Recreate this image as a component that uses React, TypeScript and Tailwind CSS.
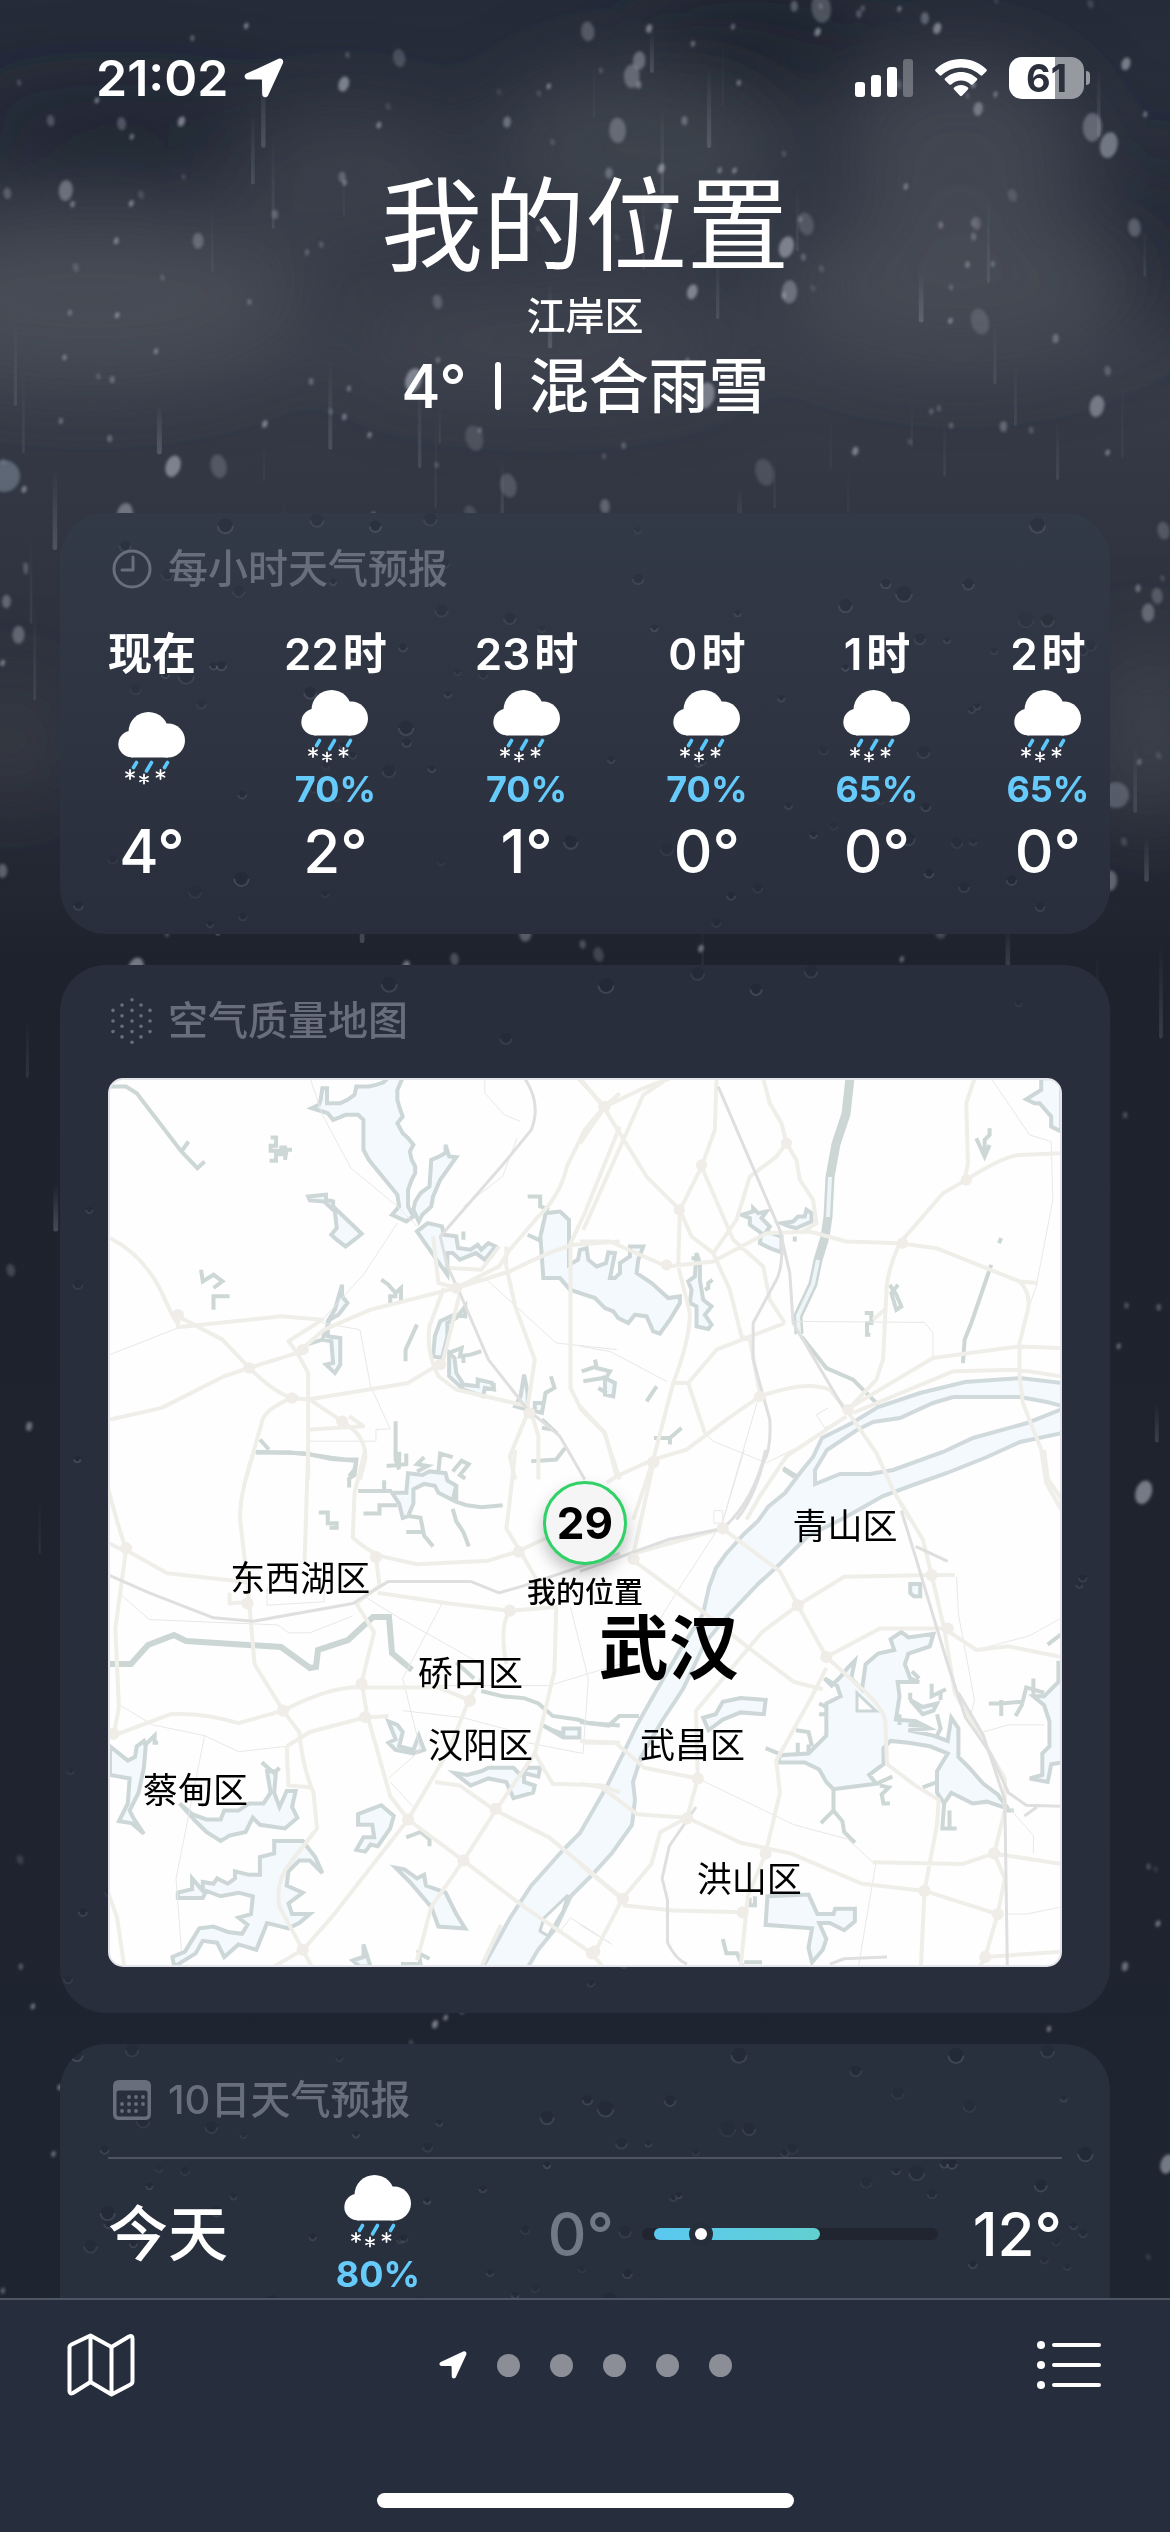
import React from 'react';

interface HourItem {
  label: string;
  unit?: string;
  chance?: string;
  temp: string;
}

interface MapLabel {
  name: string;
  x: number;
  y: number;
  className: string;
}

interface MapTile {
  transform: string;
  water: string;
  creeks: string;
  roads: string;
  rails: string;
  paths: string;
  nodes: number[][];
}

const hours: HourItem[] = [
  { label: '现在', temp: '4°' },
  { label: '22', unit: '时', chance: '70%', temp: '2°' },
  { label: '23', unit: '时', chance: '70%', temp: '1°' },
  { label: '0', unit: '时', chance: '70%', temp: '0°' },
  { label: '1', unit: '时', chance: '65%', temp: '0°' },
  { label: '2', unit: '时', chance: '65%', temp: '0°' },
];

const days = [{ name: '今天', chance: '80%', low: '0°', high: '12°', from: 4, to: 60, now: 20 }];

const MAP_W = 954;
const MAP_H = 889;

const mapLabels: MapLabel[] = [
  { name: '青山区', x: 738, y: 448, className: 'text-[35px]' },
  { name: '东西湖区', x: 191, y: 500, className: 'text-[35px]' },
  { name: '我的位置', x: 477, y: 514, className: 'text-[29px] font-medium text-[#2c2c2e]' },
  { name: '武汉', x: 561, y: 572, className: 'text-[70px] font-semibold' },
  { name: '硚口区', x: 362, y: 596, className: 'text-[35px]' },
  { name: '汉阳区', x: 372, y: 668, className: 'text-[35px]' },
  { name: '武昌区', x: 585, y: 668, className: 'text-[35px]' },
  { name: '蔡甸区', x: 86, y: 713, className: 'text-[35px]' },
  { name: '洪山区', x: 642, y: 803, className: 'text-[35px]' },
];

const tiles: MapTile[] = [
  {
    transform: 'translate(-48 -118) scale(0.357 0.333)',
    water:
      'M960,353L920,353 905,368 885,375 865,380 830,380 825,405 805,420 785,430 748,430 748,385 735,385 730,420 725,435 705,445 735,455 750,460 765,480 785,472 800,465 835,465 850,480 850,570 865,600 880,620 945,705 950,740 930,765 970,785 990,770 975,740 975,690 985,660 995,640 995,620 985,600 980,575 990,555 975,535 960,520 945,490 960,470 950,440 945,420 945,390ZM1080,555L1080,580 1062,590 1040,600 1035,680 1010,700 995,725 990,750 1005,785 1015,765 1040,740 1045,710 1065,660 1085,630 1110,592 1090,590ZM695,710L745,705 745,720 765,725 765,740 845,822 825,840 800,860 775,840 760,825 775,805 770,755 740,725 700,722ZM1000,815L1030,790 1070,800 1075,825 1110,830 1115,865 1150,870 1170,855 1180,870 1200,850 1220,860 1205,880 1190,900 1165,880 1120,900 1100,880 1085,880 1085,945 1055,900ZM790,975L790,1010 805,1030 780,1065 755,1080 745,1110 735,1140 760,1145 765,1210 745,1215 770,1240 785,1215 785,1135 750,1130 750,1085 770,1050ZM1135,1040V1070L1105,1065 1065,1085 1050,1130 1045,1190 1070,1195 1085,1130 1085,1090 1110,1075ZM1090,1180L1090,1250 1130,1290 1185,1310 1190,1285 1215,1290 1210,1270 1170,1260 1170,1280 1130,1275 1110,1240 1105,1195ZM1300,1245L1310,1300 1310,1350 1275,1340 1290,1310ZM1330,1330L1355,1330 1350,1360 1330,1355Z',
    creeks:
      'M140,380L185,380 215,400 340,575 385,625 405,605M340,575L360,545M590,533h15v25h-15v15h30v-10h10v20h-25v20h-18M650,570h-15l-5,30M395,930L400,965 430,945 455,965 430,985M430,1050V1010H475M900,960L920,975 940,1000 955,985 955,1025M925,1030V1010H945M1090,1180L1125,1165 1120,1190 1150,1185 1180,1175M1130,1190V1210M1215,1290V1270M1355,1330L1360,1300 1385,1285 1375,1250M1350,1380L1380,1410 1350,1405M1320,1505L1390,1500 1415,1465M1000,1095L968,1170V1205M1130,815V840M550,1480L640,1478 700,1485 760,1495 800,1500 830,1500 825,1530 810,1550M560,1440L585,1470M940,1385V1500L950,1530M1310,710H1345V740L1370,750M1310,825L1350,845M690,1155L735,1140',
    roads:
      'M140,835Q240,890 290,1010T330,1070L455,1140 530,1225Q600,1300 650,1315L695,1320 975,1270 1060,1215M140,1380L285,1345 460,1250 530,1225 665,1180 740,1110 870,1050 1110,985 1260,935Q1380,870 1440,855L1568,845M330,1065V1103L620,1070 735,1080 640,1145 665,1180 695,1240V1560M700,1320L790,1385Q860,1430 855,1500L840,1560M650,1315Q570,1350 565,1390L520,1560M1450,353L1525,440 1470,510 1420,620Q1400,710 1340,770L1260,870 1230,920 1110,985M1525,440L1568,400M1568,500L1470,760 1430,850V1285L1460,1350 1525,1420 1568,1560M1045,830L1060,970 1110,985M1075,985L1035,1100Q1025,1180 1060,1250L1110,1290 1310,1340 1330,1200 1275,1040 1250,920V860M1120,1000L1095,1110 1070,1215M1230,860L1180,930 1090,925M1310,1360L1260,1490 1275,1560M1320,1360L1340,1430V1560M700,1410L850,1400 810,1370',
    rails: 'M1300,353Q1350,430 1320,510L1240,615 1065,830 1085,920 1120,1000 1200,1200 1310,1350 1400,1430 1470,1560',
    paths:
      'M700,353L735,465 815,625 945,740 1000,800M945,790L850,945 735,1080M140,1185L330,1105M700,1445H885V1410L925,1408 870,1280 840,1110 735,1090M1190,353V400L1245,465 1290,485M1190,955L1390,1150 1560,1170M1130,740L1240,650 1280,535',
    nodes: [[1525, 440], [530, 1225], [650, 1315], [680, 1170], [1065, 1215], [1110, 985], [330, 1065], [1315, 1360], [790, 1385]],
  },
  {
    transform: 'translate(472 -18) scale(0.333)',
    water:
      'M-119,530L-103,460 -60,455 -33,480V615L-6,600 0,570 20,565 25,600 50,620 78,610 85,578 105,580 90,655 105,655 120,640 120,610 150,590 150,560 190,560 175,600 170,640 215,670 265,715 300,710 300,730 270,780 240,822 220,815 200,770 165,765 145,790 115,775 100,755 75,745 45,715 0,700 -30,690 -60,655 -110,655ZM485,465L520,455 520,445 535,460 560,455 545,475 570,500 560,515 605,530 605,578 570,565 540,550 545,520 510,495 510,475ZM605,490L640,485 655,470 675,470 680,450 695,460 695,485 650,505 630,500ZM350,580L345,650 325,665 335,690 330,730 350,740V800L385,808 395,795 375,765 395,740 370,720 360,660V610ZM1385,55V90L1340,118 1365,130 1380,130 1415,170V200L1445,215V55ZM75,955L105,970 100,1010 75,1005Z',
    creeks:
      'M375,690L385,685V670L398,660M335,595H355M1190,235L1215,290 1230,255M1230,205V225L1215,240V290M930,675L950,705 965,740 950,750 935,700 955,675M855,760H875V790H862V825H872M1235,615L1175,790 1155,840 1150,910M1258,550L1265,535M5,935L50,920M45,900L50,925 90,935 75,960M10,965L70,955M55,985L80,1000M230,980L200,1025M222,1135H270L305,1105M270,1135V1155M610,1225L650,1250M665,830L740,925 820,960 895,1035M645,530V545',
    roads:
      'M0,55L70,140 200,350 300,450 295,620 330,760Q330,840 280,970L220,1200 160,1380M270,55L190,85 75,140 0,250M250,65L190,105 10,510M410,55L405,210 365,320 300,450 335,530 400,580M365,320L460,540 550,620 570,720 615,790M550,55L570,130 605,190 620,250 650,300 660,360 700,420 710,490 660,520M620,250L590,290 510,350 470,480 400,580 450,690 485,830 510,840 540,1000M0,545H90L260,620 400,605 560,520 690,515 800,545 960,550 1070,565 1320,665 1375,670M1320,665Q1355,700 1345,750L1320,850V950L1330,1030 1385,1170 1400,1270 1445,1350M1185,55L1160,130 1165,310 1155,360M960,550L1090,400 1160,360Q1270,290 1320,285L1445,280M960,550Q920,640 920,700L910,900 890,960 800,1055M80,1270L110,1250 220,1200 320,1170 440,1080 540,1010Q680,960 750,990L800,1050 890,1180 940,1290 990,1380M800,1050L1060,895 1320,860 1445,865M820,1060L1120,935 1320,930 1445,950M800,1070L620,1190 540,1310 500,1380M280,970L325,970 375,1120M0,1040L75,1120 110,1250M325,970L410,870 615,790M880,780L915,750',
    rails: 'M415,80L600,510 630,640 640,790 800,1060M605,540Q610,620 590,660L520,790V900L570,1080Q575,1170 550,1210 520,1320 470,1380',
    paths:
      'M1235,55L1350,225 1415,245 1420,420 1370,680 1345,750M640,785L1035,788 1060,820V895M0,860L90,875 260,965M375,1120L400,1145 560,1210 680,1150M540,1000L430,1380M745,1045L710,1065 735,1105 800,1070',
    nodes: [[72, 140], [298, 450], [365, 315], [968, 550], [222, 1205], [805, 1050], [620, 250], [260, 615], [1160, 360], [540, 1010]],
  },
  {
    transform: 'translate(-48 372) scale(0.357)',
    water:
      'M975,65L1015,70 1035,60 1080,65 1085,85 1110,100 1100,140 1060,120 1050,100 1020,95 990,110V150L975,185 960,190 950,150 930,120 970,120ZM140,830L190,870 210,860 215,830 235,815 240,830 235,890 220,960 195,1010 205,1030 235,1075 200,1045 165,1040 190,990 195,920 140,910ZM335,990L370,1020 410,1035 450,1035 460,1010 500,1010 530,990 570,990 590,960 580,900 605,900 600,960 615,1000 635,955H660L650,1000 665,1030 630,1060 560,1050 540,1030 520,1070 475,1080 450,1095 410,1070 380,1040ZM600,1095L680,1095 695,1115 715,1140 735,1185 700,1150H670L640,1180 635,1220 680,1240 640,1270 650,1300H700L670,1325 640,1340 580,1325 550,1400 500,1385 460,1420 440,1380 400,1375 380,1410 320,1447 315,1420 350,1405 390,1340 430,1335 470,1350 510,1355 525,1330 500,1310 535,1300 540,1250 500,1240 450,1250 410,1235 400,1255H330V1240L370,1230 370,1200 400,1235 400,1210 430,1215 440,1200 470,1215 490,1200V1180L530,1190 560,1190 560,1140 600,1130ZM835,1020L860,1010 900,995 935,1025 925,1060 890,1110 870,1105 855,1125 830,1120 850,1085 880,1085 875,1050 835,1050ZM940,1170L965,1175 1000,1200 1020,1190 1025,1220 1080,1240 1110,1300 1135,1340 1060,1335 1040,1280 980,1210ZM1105,905L1140,910 1180,900 1200,890 1270,890 1290,910 1310,890 1345,890 1340,915 1300,905 1300,930 1330,940 1325,960 1270,975 1250,930 1200,920 1150,940ZM920,760L945,770 960,790 950,830 990,840 1005,800 1020,840 990,850 940,840 920,820 940,810ZM1350,770L1380,785 1410,795V780H1455V805H1410ZM820,1430L850,1420V1385L870,1447H840Z',
    creeks:
      'M835,115H930M908,85V110M915,45L970,40V10M950,50V5M1000,60L1030,45 1000,40 1020,20M1060,60L1065,10 1100,20M1100,60L1125,30 1145,40 1120,70 1135,80M1110,100V145L1140,155 1180,160 1240,155M1100,165L1110,200 1130,230 1145,270M975,185L1010,190 1020,240 1045,270M970,230H1020M850,178H895V155H945M545,5L690,10 760,25 830,30 825,70 810,80V105M725,175H750V205H775V218H755M240,825L265,800V820H275M970,1085L1010,1070 1035,1090V1110M955,1440H1010L1005,1410 1035,1425M565,875L600,905 615,890M1180,675L1240,690 1300,695 1340,710 1380,745 1450,755 1480,765 1568,772M1110,595L1160,640',
    roads:
      'M135,110L160,200 185,280 300,345 520,370M185,280L155,500 165,720 150,800M545,0Q500,130 505,200L525,370 545,600 625,730 670,790Q680,890 710,960L720,1060 650,1150Q600,1210 615,1280L680,1400 600,1447M695,0L685,320M855,0L825,120 820,245Q870,290 910,300L1000,320 1200,310 1280,285 1568,150M885,300L895,380 830,430 880,510 845,650 860,740 925,970 975,1035 1130,1150 1300,1280 1490,1410 1520,1447M150,800L310,740Q400,735 500,765L625,730Q760,660 845,665L1060,665 1145,700 1180,640M635,830L700,790 850,750 920,745M1145,700L1090,840 975,1035 760,1310 680,1400 705,1447M890,400L1090,430 1260,450 1390,440 1385,620 1330,850 1220,1010 1130,1150 1040,1280 1000,1430M1050,930L1120,940 1220,1010 1370,1085 1568,1250M1260,450Q1230,490 1250,600M1330,850L1380,935 1520,940 1568,960M1275,0Q1260,150 1250,220L1290,285 1380,440M1470,820H1568M135,1240L160,1310 180,1447M135,260L185,285M475,400V430L530,425M635,830L640,940 700,945M1180,1447L1235,1330',
    rails: 'M135,350L250,400 430,470 540,480 820,430 920,368 1150,368 1230,400 1300,380 1568,290',
    paths:
      'M165,400L250,475 610,490 640,512 700,512 820,465M860,415L950,470 1110,560 1180,600M160,710L260,770 405,800 500,845 635,830M405,800L325,1200 340,1400M920,920L1010,840 960,640 1070,430M925,930L990,1000M1400,1350L1430,1310 1540,1380M1430,440L1480,640 1465,850 1310,820M580,385V435L740,425V380M960,730L1130,750 1280,790M1060,660H1370L1568,600',
    nodes: [[185, 275], [625, 730], [845, 655], [975, 1035], [1130, 1150], [1220, 1005], [680, 1400], [885, 300], [1285, 285], [1260, 450], [1490, 1410], [150, 795], [525, 430], [1148, 702], [855, 748]],
  },
  {
    transform: 'translate(472 372) scale(0.357)',
    water:
      'M345,750L380,740 400,705 450,695 520,700 515,740 450,735 400,755 360,785ZM685,640L705,660 730,635 750,610 770,590 760,640 790,670 800,600 835,570 880,560 870,530 900,510 920,525 990,515 980,550 920,570 910,600 925,640 950,650 890,650 895,690 885,755 940,760 980,780 920,785 990,800 1030,815 1040,750 1060,780 1060,860 1090,890 1130,935 1170,965 1200,1005 1140,985 1100,990 1040,960 1020,990 1000,960 1000,900 1030,850 980,830 920,820 870,815 850,835V880L810,910 830,935 790,940 710,950 690,930 670,895 630,875H555L560,855 640,850 690,800 690,710 730,690 720,660ZM1350,640L1300,690 1270,690 1300,715 1315,760 1315,830 1295,850V910L1260,920 1310,930 1320,880 1350,875ZM925,375H953V410H935L925,400ZM525,1250L640,1245 665,1300 710,1300 715,1285 770,1285V1320L740,1345 700,1325 670,1325 690,1370 680,1400 650,1435 640,1395 650,1340 520,1330ZM925,700L960,720 1000,710 990,730 960,740Z',
    creeks:
      'M710,950L710,1010 735,1040 740,1070 770,1100M710,1010L690,1030 675,1045M925,680V700M985,655V690L1025,670M1010,700V680M1000,740L1010,780 1000,800M1020,990L1015,1060H1035V1010M1035,1060H1055M840,940L865,945 845,965 850,990H868M830,935L875,915M605,785L640,790 650,830M520,835L555,850M610,850V820M640,850V825M670,710L690,720M670,740H690M895,740V770M920,770H960M930,620L950,640M1145,710H1180L1240,705 1250,665 1300,680M1240,710L1220,745M1270,640V690M1180,745V700M1340,590V650M1350,515L1330,530 1310,545M400,1370L410,1410 440,1410 455,1447M460,1435H510M490,1250V1275H475V1255M960,945L1000,930M1190,1010H1215M0,762L80,772 110,745 165,745M570,55L600,75',
    roads:
      'M205,40L150,290 400,220M400,220L560,340 610,435 690,580 780,660Q850,720 855,760L860,880 940,940 1005,980 1000,1050 965,1235 955,1447M150,310L340,450 480,560 600,650 680,670M900,150L960,250 985,350 1020,500 1050,680 1190,920V1010L1160,1130 1190,1200 1170,1300 1135,1420 1120,1447M610,435L740,355 985,350H1050M610,435L510,510 325,730 330,920 300,1030 225,1070 200,1160 120,1255 40,1410M690,580L840,500 1020,500 1110,560 1200,550 1350,580M690,610L650,690 550,870 560,960 520,1130 470,1250 450,1447M0,815L100,820 180,890 330,920M0,935L60,945 160,1020 300,1030 450,1100 590,1130 790,1215 965,1235 1170,1300M120,1275L260,1290 460,1295M0,1160L120,1260M820,1155L1070,1160 1160,1130 1350,1160M1135,1420L1350,1405M1300,0L1310,80 1350,140',
    rails:
      'M900,170L940,300 1030,600 1080,750 1150,850 1200,960 1250,995 1350,998M940,270L1030,312M1060,680L1130,800 1190,980 1197,1447M325,1000L250,1110 230,1200 245,1260V1380Q270,1430 300,1440M700,1440L740,1425 860,1420M520,0Q490,140 400,220L250,250 0,340M1245,1025L1280,1000',
    paths:
      'M460,0L400,200 270,400 220,480M1055,355L1060,460 1105,700 1095,740M830,1150L780,1447M330,920L600,1050 750,1090 820,1155M1200,1000L1270,1080V1130M1110,560L1260,520 1350,470M1130,790L1200,770H1300M0,1330L90,1385M1190,1300H1250L1350,1280M375,170H400V205H375Z',
    nodes: [[205, 35], [610, 435], [690, 580], [985, 350], [1030, 500], [300, 1032], [120, 1257], [965, 1235], [1160, 1130], [1170, 1300], [1135, 1420], [40, 1405], [400, 220], [150, 305], [520, 1130], [330, 920], [455, 1295]],
  },
];

const yangtze =
  'M954,305L912,300 857,304 812,315 770,329 744,345 714,360 705,379 692,395 677,415 660,429 650,443 636,456 618,476 608,490 601,509 595,536 572,572 547,615 529,647 515,676 499,708 472,755 455,772 423,808 402,840 375,889H420L430,872 448,850 463,818 484,797 504,775 524,747 527,722 525,704 533,679 554,643 575,611 597,565 615,543 650,506 672,486 700,458 736,440 775,418 805,407 839,395 879,379 912,364 954,355V331L919,345 865,360 835,374 785,392 762,396H732L707,406V392L719,372 749,352 765,344 792,340 825,325 845,319H912L939,324 954,328Z';

// small LCG so that the weather looks the same on every render
const scatter = (count: number, seed: number) => {
  let s = seed;
  const next = () => {
    s = (s * 1664525 + 1013904223) % 4294967296;
    return s / 4294967296;
  };
  return [...Array(count)].map(() => ({ x: next(), y: next(), size: next(), alpha: next() }));
};

const flakes = scatter(420, 77);
const streaks = scatter(110, 41);
const drops = scatter(90, 19);

const Sky = () => (
  <svg
    className="absolute inset-0 h-full w-full"
    viewBox="0 0 1170 2532"
    preserveAspectRatio="xMidYMin slice"
    aria-hidden="true"
  >
    <defs>
      <linearGradient id="sky" x1="0" y1="0" x2="0" y2="1">
        <stop offset="0" stopColor="#252b38" />
        <stop offset="0.06" stopColor="#2a303d" />
        <stop offset="0.14" stopColor="#383d49" />
        <stop offset="0.2" stopColor="#313642" />
        <stop offset="0.3" stopColor="#2b2f3b" />
        <stop offset="0.38" stopColor="#1e222d" />
        <stop offset="1" stopColor="#1e2531" />
      </linearGradient>
      <filter id="haze" x="-50%" y="-50%" width="200%" height="200%">
        <feGaussianBlur stdDeviation="40" />
      </filter>
      <filter id="soft">
        <feGaussianBlur stdDeviation="1.4" />
      </filter>
      <linearGradient id="streak" x1="0" y1="0" x2="0" y2="1">
        <stop offset="0" stopColor="#aab2c0" stopOpacity="0" />
        <stop offset="1" stopColor="#aab2c0" />
      </linearGradient>
    </defs>
    <rect width="1170" height="2532" fill="url(#sky)" />
    <g filter="url(#haze)">
      <ellipse cx="640" cy="150" rx="150" ry="80" fill="#474c56" opacity="0.7" />
      <ellipse cx="960" cy="150" rx="120" ry="90" fill="#4b5059" opacity="0.7" />
      <ellipse cx="90" cy="300" rx="220" ry="80" fill="#4c515b" opacity="0.8" />
      <ellipse cx="350" cy="180" rx="120" ry="70" fill="#454a54" opacity="0.6" />
      <ellipse cx="540" cy="340" rx="200" ry="50" fill="#444953" opacity="0.6" />
      <ellipse cx="960" cy="290" rx="180" ry="70" fill="#4a4f59" opacity="0.8" />
      <ellipse cx="760" cy="50" rx="110" ry="50" fill="#1c212c" opacity="0.8" />
      <ellipse cx="120" cy="130" rx="160" ry="35" fill="#1f2531" opacity="0.9" />
      <ellipse cx="1165" cy="240" rx="50" ry="90" fill="#232834" opacity="0.8" />
      <ellipse cx="1150" cy="730" rx="60" ry="90" fill="#454851" opacity="0.7" />
      <ellipse cx="10" cy="740" rx="60" ry="60" fill="#3c404a" opacity="0.6" />
    </g>
    {streaks.map((d, i) => (
      <rect
        key={i}
        x={d.x * 1170}
        y={d.y * 1500}
        width={2 + d.size * 3}
        height={40 + d.alpha * 60}
        rx="2"
        fill="url(#streak)"
        opacity={0.06 + d.size * 0.22}
      />
    ))}
    <g filter="url(#soft)">
      {flakes.map((d, i) => {
        const r = 2 + d.size ** 5 * 8;
        return (
          <ellipse
            key={i}
            cx={d.x * 1170}
            cy={d.y * (0.5 + d.y * 0.5) * 2300}
            rx={r}
            ry={r * 1.5}
            fill="#b4bac5"
            opacity={0.15 + d.alpha * 0.45}
            transform={`rotate(${(d.alpha - 0.5) * 40} ${d.x * 1170} ${d.y * (0.5 + d.y * 0.5) * 2300})`}
          />
        );
      })}
      <circle cx="4" cy="476" r="16" fill="#8796a5" opacity="0.5" />
      <circle cx="1116" cy="795" r="13" fill="#6f7886" opacity="0.6" />
    </g>
  </svg>
);

// rain beads on the glass of a card
const Beads = ({ offset }: { offset: number }) => (
  <svg className="pointer-events-none absolute inset-0 h-full w-full" aria-hidden="true">
    {drops.map((d, i) => {
      const r = 3 + d.size * d.size * 5;
      return (
        <svg key={i} x={`${((d.x + offset) % 1) * 98}%`} y={`${d.y * 98}%`} overflow="visible">
          <circle cx={r} cy={r} r={r} fill="#181d28" opacity={0.12 + d.alpha * 0.15} />
          <path
            d={`M0 ${r}A${r} ${r} 0 0 0 ${r * 2} ${r}`}
            fill="none"
            stroke="#8c95a3"
            strokeWidth="2"
            opacity={0.1 + d.alpha * 0.16}
          />
        </svg>
      );
    })}
  </svg>
);

const LocationArrow = ({ className }: { className: string }) => (
  <svg className={className} viewBox="0 0 40 40" fill="currentColor" aria-hidden="true">
    <path d="M34.600 0.800 2.500 15.600C-0.500 17.200 0.300 21.300 3.800 21.400L17 21.500C17.700 21.500 18 21.800 18 22.500L18.200 36C18.300 39.700 22.700 40.400 24.200 37.200L38.900 5.200C40.200 2.200 37.600-0.600 34.600 0.800Z" />
  </svg>
);

const StatusBar = () => (
  <div className="flex h-[156px] items-center justify-between pr-20 pl-24">
    <div className="flex items-center gap-4">
      <span className="text-[50px] leading-none font-semibold">21:02</span>
      <LocationArrow className="h-10 w-10" />
    </div>
    <div className="flex items-center gap-[22px]">
      <svg className="h-[38px] w-[58px]" viewBox="0 0 58 38" fill="currentColor" aria-hidden="true">
        <rect x="0" y="23" width="10" height="15" rx="3" />
        <rect x="16" y="16" width="10" height="22" rx="3" />
        <rect x="32" y="8" width="10" height="30" rx="3" />
        <rect x="48" y="0" width="10" height="38" rx="3" opacity="0.28" />
      </svg>
      <svg className="h-[38px] w-[52px]" viewBox="0 0 52 38" fill="currentColor" aria-hidden="true">
        <path d="M26 0C16 0 7 4 0.600 10.300 0 11 0 11.700 0.600 12.300L4.600 16.300C5.200 16.900 6 16.900 6.600 16.300 11.700 11.300 18.500 8.500 26 8.500S40.300 11.300 45.400 16.300C46 16.900 46.800 16.900 47.400 16.300L51.400 12.300C52 11.700 52 11 51.400 10.300 45 4 36 0 26 0Z" />
        <path d="M26 13C20 13 14.300 15.300 10.100 19.300 9.500 19.900 9.500 20.700 10.100 21.300L14.300 25.400C14.900 26 15.600 26 16.200 25.400 18.900 23 22.300 21.600 26 21.600S33.100 23 35.800 25.400C36.400 26 37.100 26 37.700 25.400L41.900 21.300C42.500 20.700 42.500 19.900 41.900 19.300 37.700 15.300 32 13 26 13Z" />
        <path d="M26 26C23.300 26 21 27 19.100 28.600 18.500 29.200 18.500 29.900 19.100 30.500L25 36.800C25.600 37.400 26.400 37.400 27 36.800L32.900 30.500C33.500 29.900 33.500 29.200 32.900 28.600 31 27 28.700 26 26 26Z" />
      </svg>
      <div className="flex items-center gap-0.5">
        <div className="flex h-[42px] w-[75px] items-center justify-center rounded-[13px] bg-linear-to-r from-white from-61% to-[#96999f] to-61%">
          <span className="text-[38px] leading-none font-bold text-[#2b303c]">61</span>
        </div>
        <div className="h-3.5 w-1 rounded-r-full bg-[#96999f]" />
      </div>
    </div>
  </div>
);

const SleetIcon = () => (
  <svg className="h-[73px] w-[68px]" viewBox="0 0 68 73" role="img" aria-label="雨夹雪">
    <g fill="#fff">
      <circle cx="13.500" cy="32" r="13.200" />
      <circle cx="30.500" cy="20" r="20" />
      <circle cx="50" cy="28.500" r="17" />
      <path d="M13 22H50V45.400H13Z" />
    </g>
    <g stroke="#5ac8fa" strokeWidth="3.600" strokeLinecap="round">
      <path d="M18.500 50.500 15.500 55.500M33.500 50.500 28.500 59M49.500 50.500 46.500 55.500" />
    </g>
    <g stroke="#fff" strokeWidth="1.800" strokeLinecap="round">
      <path d="M12 58V67M8 60.200 16 64.800M16 60.200 8 64.800" />
      <path d="M26 62.500V71.500M22 64.700 30 69.300M30 64.700 22 69.300" />
      <path d="M42.500 58V67M38.500 60.200 46.500 64.800M46.500 60.200 38.500 64.800" />
    </g>
  </svg>
);

const ClockIcon = () => (
  <svg className="h-10 w-12" viewBox="0 0 48 40" fill="none" stroke="currentColor" strokeWidth="3" aria-hidden="true">
    <circle cx="24" cy="20" r="18" />
    <path d="M25 8V21H14" strokeLinecap="round" strokeLinejoin="round" />
  </svg>
);

const DotsIcon = () => (
  <svg className="h-12 w-12" viewBox="0 0 48 48" fill="currentColor" aria-hidden="true">
    {[[5, 3], [14, 4], [24, 5], [33, 4], [42, 3]].map(([x, n]) =>
      [...Array(n)].map((_, i) => <circle key={`${x}-${i}`} cx={x} cy={24 + (i - (n - 1) / 2) * 10.6} r="1.800" />),
    )}
  </svg>
);

const CalendarIcon = () => (
  <svg className="h-10 w-12" viewBox="0 0 48 40" aria-hidden="true">
    <path
      fillRule="evenodd"
      fill="currentColor"
      d="M11 0H37Q43 0 43 6V34Q43 40 37 40H11Q5 40 5 34V6Q5 0 11 0ZM11 10.500Q8.500 10.500 8.500 13V34Q8.500 36.500 11 36.500H37Q39.500 36.500 39.500 34V13Q39.500 10.500 37 10.500Z"
    />
    <g fill="currentColor">
      {[[21, 17], [28, 17], [35, 17], [14, 24], [21, 24], [28, 24], [35, 24], [14, 31], [21, 31], [28, 31]].map(([x, y]) => (
        <circle key={`${x}-${y}`} cx={x} cy={y} r="1.900" />
      ))}
    </g>
  </svg>
);

interface CardProps {
  icon: React.ReactNode;
  title: string;
  offset: number;
  className: string;
  children: React.ReactNode;
}

const Card = ({ icon, title, offset, className, children }: CardProps) => (
  <section className={`relative overflow-hidden rounded-[46px] px-12 pt-9 ${className}`}>
    <Beads offset={offset} />
    <h2 className="relative flex h-10 items-center gap-3 text-[40px] leading-none font-medium text-[#686e7b]">
      {icon}
      {title}
    </h2>
    {children}
  </section>
);

const AirMap = () => (
  <div className="relative mt-[37px] aspect-[954/889] w-full overflow-hidden rounded-[15px] border-2 border-[#e3e5ea] bg-[#fefefe]">
    <svg
      className="absolute -inset-0.5 h-[calc(100%+4px)] w-[calc(100%+4px)]"
      viewBox={`0 0 ${MAP_W} ${MAP_H}`}
      fill="none"
      aria-hidden="true"
    >
      <path d={yangtze} fill="#f3f9fd" stroke="#d0dadc" strokeWidth="4" />
      <path d="M742,0 738,36 728,66 722,99 720,139 717,159 710,182 705,206 690,238 691,256" stroke="#ccd6d5" strokeWidth="9" />
      <path d="M722,99 720,139 M710,182 705,206 690,238 691,256" stroke="#eef5f8" strokeWidth="4" />
      <path
        d="M0,586H23L40,567 66,557 78,563 173,569 202,590 208,589 210,572 240,562 265,539 281,539 284,575 304,592"
        stroke="#ccd6d5"
        strokeWidth="6"
      />
      {tiles.map((tile) => (
        <g key={tile.transform} transform={tile.transform}>
          <path d={tile.water} fill="#f3f9fd" stroke="#cdd7d7" strokeWidth="4" vectorEffect="non-scaling-stroke" />
          <path d={tile.creeks} stroke="#cdd7d5" strokeWidth="4" vectorEffect="non-scaling-stroke" />
        </g>
      ))}
      <path d="M749,615 768,633H749Z" fill="#fefefe" stroke="#cdd7d7" strokeWidth="3" />
      <path d="M432,853 436,840 460,817 455,833 440,858Z" fill="#fefefe" stroke="#cdd7d7" strokeWidth="3" />
      {tiles.map((tile) => (
        <g key={tile.transform} transform={tile.transform} strokeLinejoin="round">
          <path d={tile.paths} stroke="#e9e8e7" strokeWidth="1" vectorEffect="non-scaling-stroke" />
          <path d={tile.roads} stroke="#f0eee8" strokeWidth="4" vectorEffect="non-scaling-stroke" />
          <path d={tile.rails} stroke="#e0dfe0" strokeWidth="3" vectorEffect="non-scaling-stroke" />
          {tile.nodes.map(([x, y]) => (
            <circle key={`${x}-${y}`} cx={x} cy={y} r="17" fill="#f0ede8" />
          ))}
        </g>
      ))}
    </svg>

    <div
      className="absolute flex h-[84px] w-[84px] -translate-x-1/2 -translate-y-1/2 items-center justify-center rounded-full border-3 border-[#30d167] bg-[#f5f5f5] text-[44px] leading-none font-bold text-black shadow-[0_8px_16px_rgba(0,0,0,0.25)]"
      style={{ left: `${(477 / MAP_W) * 100}%`, top: `${(445 / MAP_H) * 100}%` }}
    >
      29
    </div>
    {mapLabels.map((label) => (
      <span
        key={label.name}
        className={`absolute -translate-x-1/2 -translate-y-1/2 leading-none whitespace-nowrap text-black ${label.className}`}
        style={{ left: `${(label.x / MAP_W) * 100}%`, top: `${(label.y / MAP_H) * 100}%` }}
      >
        {label.name}
      </span>
    ))}
  </div>
);

const TabBar = () => (
  <footer className="relative z-10 flex h-[234px] shrink-0 flex-col justify-between border-t-2 border-[#4e5563] bg-[#262d3c] pb-6">
    <div className="flex items-center justify-between px-16 pt-7">
      <button type="button" aria-label="地图" className="flex h-[74px] w-[74px] items-center justify-center">
        <svg className="h-16 w-[68px]" viewBox="0 0 68 64" fill="none" stroke="currentColor" strokeWidth="4" strokeLinejoin="round" aria-hidden="true">
          <path d="M2.500 14.500Q2.500 12.500 4.500 11.500L23.500 2.500 44.500 14 62 3.500Q65.500 2 65.500 5.500V48Q65.500 50.500 63.500 51.500L44.500 61.500 23.500 49 6 60Q2.500 61.500 2.500 58Z" />
          <path d="M23.500 2.500V49M44.500 14V61.500" />
        </svg>
      </button>
      <div className="flex items-center gap-[30px]">
        <LocationArrow className="h-7 w-7" />
        {[...Array(5)].map((_, i) => (
          <span key={i} className="h-[23px] w-[23px] rounded-full bg-[#8b8e97]" />
        ))}
      </div>
      <button type="button" aria-label="城市列表" className="flex h-[74px] w-[74px] items-center justify-center">
        <svg className="h-12 w-16" viewBox="0 0 64 48" fill="currentColor" aria-hidden="true">
          {[4, 24, 44].map((y) => (
            <g key={y}>
              <circle cx="4" cy={y} r="4" />
              <rect x="15" y={y - 2} width="49" height="4" rx="2" />
            </g>
          ))}
        </svg>
      </button>
    </div>
    <div className="mx-auto h-[15px] w-[417px] rounded-full bg-white" />
  </footer>
);

export default function App() {
  return (
    <div className="relative flex h-screen flex-col overflow-hidden bg-[#1e2330] font-['Inter','Noto_Sans_CJK_SC',sans-serif] text-white">
      <Sky />
      <main className="relative min-h-0 flex-1 overflow-hidden">
        <StatusBar />

        <header className="pt-3 text-center">
          <h1 className="text-[102px] leading-[116px] font-normal">我的位置</h1>
          <p className="mt-2.5 text-[39px] leading-[44px] font-medium">江岸区</p>
          <p className="mt-3.5 flex items-center justify-center gap-7 text-[60px] leading-[68px] font-medium">
            <span>4°</span>
            <span className="h-12 w-1.5 rounded-full bg-white" />
            <span>混合雨雪</span>
          </p>
        </header>

        <div className="mt-[93px] flex flex-col gap-[31px] px-[60px]">
          <Card
            icon={<ClockIcon />}
            title="每小时天气预报"
            offset={0}
            className="bg-linear-to-b from-[#333a47] to-[#292e3c] pb-[51px]"
          >
            <ul className="relative mt-[41px] flex gap-[88px]">
              {hours.map((hour) => (
                <li key={hour.label} className="flex shrink-0 flex-col items-center">
                  <div className="flex h-12 items-center gap-1 text-[44px] leading-none font-semibold">
                    <span>{hour.label}</span>
                    {hour.unit && <span>{hour.unit}</span>}
                  </div>
                  <div className="mt-3 flex h-[117px] flex-col items-center justify-center gap-2">
                    <SleetIcon />
                    {hour.chance && (
                      <span className="text-[36px] leading-9 font-bold text-[#66cbfb]">{hour.chance}</span>
                    )}
                  </div>
                  <span className="mt-3 text-[60px] leading-[64px] font-medium">{hour.temp}</span>
                </li>
              ))}
            </ul>
          </Card>

          <Card icon={<DotsIcon />} title="空气质量地图" offset={0.37} className="bg-[#292e3c] pb-[46px]">
            <AirMap />
          </Card>

          <Card icon={<CalendarIcon />} title="10日天气预报" offset={0.71} className="bg-[#282f3d] pb-16">
            <ul className="relative mt-[37px]">
              {days.map((day) => (
                <li
                  key={day.name}
                  className="grid grid-cols-[200px_140px_166px_1fr_96px] items-center border-t-2 border-[#4e5462] py-4"
                >
                  <span className="text-[60px] leading-none font-medium">{day.name}</span>
                  <div className="flex flex-col items-center gap-2">
                    <SleetIcon />
                    <span className="text-[36px] leading-9 font-bold text-[#66cbfb]">{day.chance}</span>
                  </div>
                  <span className="text-right text-[60px] leading-none font-medium text-[#727986]">{day.low}</span>
                  <div className="relative mx-7 h-3 rounded-full bg-[#20252f]">
                    <div
                      className="absolute h-3 rounded-full bg-linear-to-r from-[#5ac8f0] to-[#62d0d0]"
                      style={{ left: `${day.from}%`, width: `${day.to - day.from}%` }}
                    />
                    <div
                      className="absolute top-1/2 box-content h-3 w-3 -translate-x-1/2 -translate-y-1/2 rounded-full bg-white ring-6 ring-[#262d3b]"
                      style={{ left: `${day.now}%` }}
                    />
                  </div>
                  <span className="text-right text-[60px] leading-none font-medium">{day.high}</span>
                </li>
              ))}
            </ul>
          </Card>
        </div>
      </main>
      <TabBar />
    </div>
  );
}
